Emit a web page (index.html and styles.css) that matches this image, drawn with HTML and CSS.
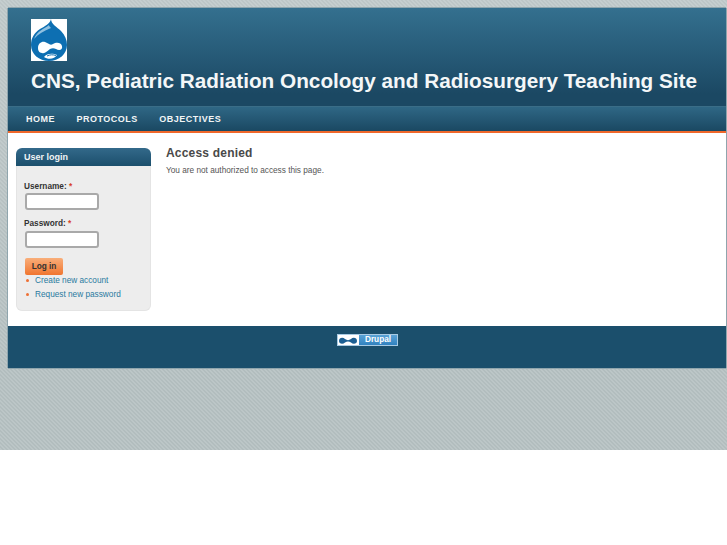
FILE: index.html
```html
<!DOCTYPE html>
<html lang="en">
<head>
<meta charset="utf-8">
<title>CNS, Pediatric Radiation Oncology and Radiosurgery Teaching Site</title>
<link rel="stylesheet" href="styles.css">
</head>
<body>
<div class="backdrop">
  <div class="page">
    <header class="masthead">
      <a class="logo" href="#" aria-label="Home">
        <svg viewBox="0 0 36 42" width="36" height="42">
          <rect width="36" height="42" fill="#fff"/>
          <path d="M20 0C20 5 26 8 30 12C34 16 36 21 36 26C36 35 28 42 18 42C8 42 0 35 0 26C0 19 3 14 9 10C14 7 19 5 20 0Z" fill="#0d6fb2"/>
          <path d="M18 6C13 10 6 12 3 20C7 15 13 12 20 9C19 8 18 7 18 6Z" fill="#8fc0e0"/>
          <path d="M7 29C7 24 11 22 14 23C17 24 19 27 22 25C25 23 30 23 31 27C32 31 28 32 25 30C23 29 21 29 19 30C16 32 14 35 11 34C8 34 7 31 7 29Z" fill="#fff"/>
          <path d="M13 38C16 34 22 34 26 36C24 40 17 41 13 38Z" fill="#fff"/>
          <path d="M16 37C19 35.500 22 35.500 25 36.500" fill="none" stroke="#0d6fb2" stroke-width="1"/>
        </svg>
      </a>
      <h1 class="site-name">CNS, Pediatric Radiation Oncology and Radiosurgery Teaching Site</h1>
    </header>
    <nav class="nav">
      <a href="#">HOME</a>
      <a href="#">PROTOCOLS</a>
      <a href="#">OBJECTIVES</a>
    </nav>
    <main class="main">
      <aside class="block">
        <h2 class="block-title">User login</h2>
        <form class="block-body">
          <label class="field-label" for="u">Username: <span class="req">*</span></label>
          <input class="text-input" id="u" type="text">
          <label class="field-label second" for="p">Password: <span class="req">*</span></label>
          <input class="text-input password" id="p" type="password">
          <button class="submit" type="button">Log in</button>
          <ul class="links">
            <li><a href="#">Create new account</a></li>
            <li><a href="#">Request new password</a></li>
          </ul>
        </form>
      </aside>
      <section class="content">
        <h2 class="content-title">Access denied</h2>
        <p class="content-text">You are not authorized to access this page.</p>
      </section>
    </main>
    <footer class="footer">
      <a class="badge" href="#">
        <span class="badge-icon">
          <svg viewBox="0 0 20 10" width="20" height="10">
            <path d="M1 6C1 2.500 5 2 7 4C9 5.500 11 5.500 13 4C15 2 19 2.500 19 6C19 9 15 9.500 13 7.500C11 6 9 6 7 7.500C5 9.500 1 9 1 6Z" fill="#1b5f93"/>
          </svg>
        </span>
        <span class="badge-text">Drupal</span>
      </a>
    </footer>
  </div>
</div>
</body>
</html>
```
FILE: styles.css
```css
* { box-sizing: border-box; }
html, body { margin: 0; padding: 0; background: #fff; }
body { font-family: "Liberation Sans", Arial, sans-serif; color: #494949; }
.backdrop {
  height: 450px;
  padding: 8px 0 0 8px;
  background-color: #b8c2c3;
  background-image:
    linear-gradient(rgba(255, 255, 255, .14), rgba(255, 255, 255, 0) 370px),
    linear-gradient(45deg, #b2bdbe 25%, #bcc6c7 25%, #bcc6c7 50%, #b2bdbe 50%, #b2bdbe 75%, #bcc6c7 75%);
  background-size: 100% 100%, 4px 4px;
}
.page { width: 718px; height: 360px; display: flex; flex-direction: column; background: #fff; box-shadow: -1px 0 0 #8fa5ad, 1px 0 0 #8fa5ad, 0 1px 0 #8fa5ad, 0 -1px 0 #8fa5ad; }
.masthead {
  height: 98px;
  padding: 11px 0 0 23px;
  background: linear-gradient(#34708f, #1b4863 88%, #1b4863);
}
.logo { display: block; width: 36px; height: 42px; }
.logo svg { display: block; }
.site-name { margin: 6px 0 0; font-size: 20.750px; line-height: 27px; font-weight: bold; color: #f4f7f8; white-space: nowrap; }
.nav {
  height: 27px;
  padding: 0 0 1px 18px;
  display: flex;
  gap: 21.500px;
  align-items: center;
  border-top: 1px solid #3a6d87;
  border-bottom: 2px solid #f0682a;
  background: linear-gradient(#2f6785, #1a4862);
}
.nav a { font-size: 9px; font-weight: bold; letter-spacing: .5px; color: #f2f5f6; text-decoration: none; }
.main { flex: 1; display: flex; align-items: flex-start; padding: 15px 0 0 8px; }
.block { width: 135px; flex: none; }
.block-title {
  margin: 0;
  height: 18px;
  padding-left: 8px;
  font-size: 9px;
  line-height: 18px;
  color: #f0f4f5;
  border-radius: 6px 6px 0 0;
  background: linear-gradient(#33698a, #1b4f6c);
}
.block-body {
  height: 145px;
  padding: 15px 8px 0;
  background: #ededed;
  border: 1px solid #e4e4e4;
  border-top: 0;
  border-radius: 0 0 6px 6px;
}
.field-label { display: block; font-size: 8.250px; line-height: 12px; font-weight: bold; color: #333; margin-left: -1px; }
.field-label.second { margin-top: 8px; }
.req { color: #d8402a; }
.text-input { display: block; width: 74px; height: 17px; margin: 0; background: #fff; border: 2px solid #a9a9a9; border-radius: 3px; padding: 0; }
.text-input.password { margin-top: 1px; }
.submit {
  display: block;
  width: 38px;
  height: 17px;
  margin: 10px 0 0;
  padding: 0;
  font: bold 8.250px "Liberation Sans", Arial, sans-serif;
  color: #333;
  border: 0;
  border-radius: 2px;
  background: linear-gradient(#f9ae7a, #f0752f);
}
.links { list-style: none; margin: -1px 0 0; padding: 0 0 0 2px; }
.links li { position: relative; padding-left: 8px; font-size: 8.250px; line-height: 13.500px; color: #ee7034; }
.links li::before { content: ""; position: absolute; left: -1px; top: 5px; width: 3px; height: 3px; border-radius: 50%; background: #ee7034; }
.links a { color: #2a7a9f; text-decoration: none; }
.content { margin-left: 15px; }
.content-title { margin: -2px 0 0; font-size: 12px; line-height: 15px; color: #494949; letter-spacing: .2px; }
.content-text { margin: 3px 0 0; font-size: 8.250px; line-height: 13px; color: #555; }
.footer { height: 42px; display: flex; justify-content: center; padding-top: 8px; background: #1b4f6c; }
.badge { display: flex; width: 61px; height: 12px; margin-left: 1px; border: 1px solid #a8cbe4; text-decoration: none; }
.badge-icon { width: 21px; background: #fff; display: flex; align-items: center; }
.badge-icon svg { display: block; }
.badge-text { flex: 1; background: linear-gradient(#5aa3d6, #3182c0); color: #fff; font-size: 8.250px; font-weight: bold; line-height: 10px; text-align: center; }
```
